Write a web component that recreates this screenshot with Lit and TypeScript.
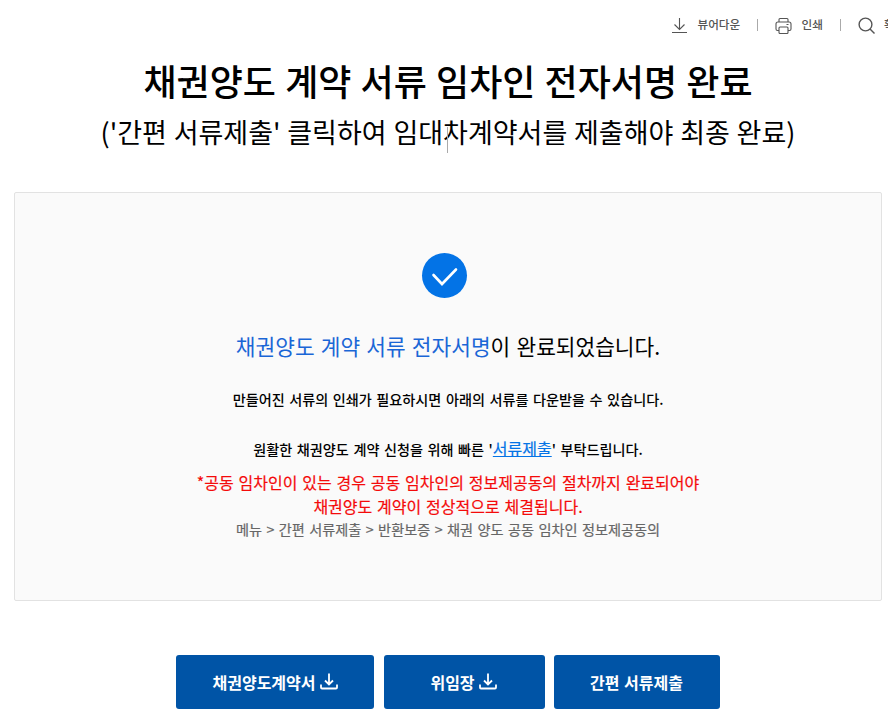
import { LitElement, html, css, svg } from 'lit';
import { customElement, property } from 'lit/decorators.js';

type IconName = 'download' | 'print' | 'search' | 'save' | 'check';

const iconShapes = {
  download: svg`<path d="M8.5 1v11.5M3.5 7.5l5 5 5-5M1 15.5h15" />`,
  print: svg`<path d="M4 5V2.5q0-1 1-1h7q1 0 1 1V5M4 13.5H2.5q-1.5 0-1.5-1.5V7q0-2 2-2h11q2 0 2 2v5q0 1.5-1.5 1.5H13M5 10h7q1 0 1 1v4.5q0 1-1 1H5q-1 0-1-1V11q0-1 1-1zM11.5 7.5h2" />`,
  search: svg`<circle cx="7.5" cy="7.5" r="6.4" /><path d="M12 12l4.5 4.5" />`,
  save: svg`<path d="M9 .5v10.500M5 7.500l4 4 4-4M1 11.500v3q0 1 1 1h14q1 0 1-1v-3" />`,
  check: svg`<path d="M11.5 22l8.5 9 14-14.5" stroke-linecap="round" />`,
};

const iconSizes = {
  download: 17,
  print: 17,
  search: 17,
  save: 18,
  check: 45,
};

@customElement('line-icon')
export class LineIcon extends LitElement {
  static styles = css`
    :host {
      display: inline-flex;
      flex: none;
    }

    svg {
      display: block;
      fill: none;
      stroke: currentColor;
      stroke-width: var(--stroke, 1.1);
    }
  `;

  @property({ type: String })
  name: IconName = 'download';

  render() {
    const size = iconSizes[this.name];

    return html`
      <svg width=${size} height=${size} viewBox="0 0 ${size} ${size}">${iconShapes[this.name]}</svg>
    `;
  }
}

@customElement('app-root')
export class AppRoot extends LitElement {
  static styles = css`
    :host {
      display: block;
      width: 888px;
      height: 713px;
      overflow: hidden;
      background: #fff;
      color: #000;
      font-family: 'Noto Sans CJK KR', sans-serif;
      white-space: nowrap;
    }

    h1, h2, p {
      margin: 0;
    }

    .toolbar {
      display: flex;
      align-items: center;
      height: 50px;
      padding-left: 671px;
      box-sizing: border-box;
      color: #555;
      font-size: 11.6px;
      font-weight: 500;
    }

    .tool {
      display: flex;
      align-items: center;
      gap: 9.5px;
      flex: none;
    }

    .tool span {
      margin-top: -2px;
    }

    .zoom {
      --stroke: 1.4;
      gap: 9.5px;
    }

    .divider {
      flex: none;
      width: 1px;
      height: 12px;
      margin: 0 16.5px 0 17.3px;
      background: #aaa;
    }

    .heading {
      position: relative;
      padding-left: 8px;
      text-align: center;
    }

    .title {
      margin-top: -2px;
      font-size: 36px;
      font-weight: 500;
      line-height: 64px;
      word-spacing: 1.1px;
    }

    .subtitle {
      margin-top: 1px;
      font-size: 27px;
      font-weight: 400;
      line-height: 38px;
      word-spacing: 0.7px;
    }

    .caret {
      position: absolute;
      left: 447px;
      top: 79px;
      width: 1px;
      height: 26px;
      background: #aaa;
    }

    .panel {
      display: flex;
      flex-direction: column;
      align-items: center;
      box-sizing: border-box;
      width: 868px;
      height: 409px;
      margin: 41px 0 0 14px;
      padding-top: 60px;
      border: 1px solid #e2e2e2;
      border-radius: 2px;
      background: #fafafa;
    }

    .badge {
      --stroke: 2.6;
      margin-right: 7px;
      border-radius: 50%;
      background: #0373e6;
      color: #fff;
    }

    .status {
      margin-top: 32px;
      font-size: 21.4px;
      line-height: 32px;
      word-spacing: 1.4px;
    }

    .accent {
      color: #1a66d6;
    }

    .text {
      margin-top: 25px;
      font-size: 14.15px;
      font-weight: 500;
      line-height: 24px;
      word-spacing: 1.35px;
    }

    .link {
      color: #0373e6;
      font-size: 16px;
      font-weight: 400;
      text-decoration: underline;
      -webkit-text-stroke: 0.2px currentColor;
    }

    .warning {
      margin-top: 9px;
      color: #f40a0a;
      font-size: 16px;
      line-height: 24px;
      text-align: center;
      word-spacing: 1.25px;
      -webkit-text-stroke: 0.2px currentColor;
    }

    .path {
      color: #666;
      font-size: 14.15px;
      line-height: 22px;
      word-spacing: 1.3px;
      -webkit-text-stroke: 0.2px currentColor;
    }

    .actions {
      display: flex;
      gap: 10px;
      margin: 54px 0 0 176px;
    }

    .button {
      display: flex;
      align-items: center;
      justify-content: center;
      gap: 4px;
      box-sizing: border-box;
      height: 54px;
      padding: 0 0 1px;
      border: 0;
      border-radius: 3px;
      background: #0054a6;
      color: #fff;
      font: 700 16px 'Noto Sans CJK KR', sans-serif;
      word-spacing: 1px;
      --stroke: 1.8;
    }

    .contract {
      width: 198px;
    }

    .proxy {
      width: 161px;
      padding-right: 2px;
    }

    .submit {
      width: 166px;
      margin-left: -1.5px;
    }
  `;

  render() {
    return html`
      <div class="toolbar">
        <div class="tool"><line-icon name="download"></line-icon><span>뷰어다운</span></div>
        <div class="divider"></div>
        <div class="tool"><line-icon name="print"></line-icon><span>인쇄</span></div>
        <div class="divider"></div>
        <div class="tool zoom"><line-icon name="search"></line-icon><span>확대</span></div>
      </div>

      <div class="heading">
        <h1 class="title">채권양도 계약 서류 임차인 전자서명 완료</h1>
        <h2 class="subtitle">('간편 서류제출' 클릭하여 임대차계약서를 제출해야 최종 완료)</h2>
        <div class="caret"></div>
      </div>

      <div class="panel">
        <line-icon class="badge" name="check"></line-icon>
        <p class="status"><span class="accent">채권양도 계약 서류 전자서명</span>이 완료되었습니다.</p>
        <p class="text">만들어진 서류의 인쇄가 필요하시면 아래의 서류를 다운받을 수 있습니다.</p>
        <p class="text">원활한 채권양도 계약 신청을 위해 빠른 '<span class="link">서류제출</span>' 부탁드립니다.</p>
        <p class="warning">
          *공동 임차인이 있는 경우 공동 임차인의 정보제공동의 절차까지 완료되어야<br />
          채권양도 계약이 정상적으로 체결됩니다.
        </p>
        <p class="path">메뉴 &gt; 간편 서류제출 &gt; 반환보증 &gt; 채권 양도 공동 임차인 정보제공동의</p>
      </div>

      <div class="actions">
        <button class="button contract">채권양도계약서<line-icon name="save"></line-icon></button>
        <button class="button proxy">위임장<line-icon name="save"></line-icon></button>
        <button class="button submit">간편 서류제출</button>
      </div>
    `;
  }
}
